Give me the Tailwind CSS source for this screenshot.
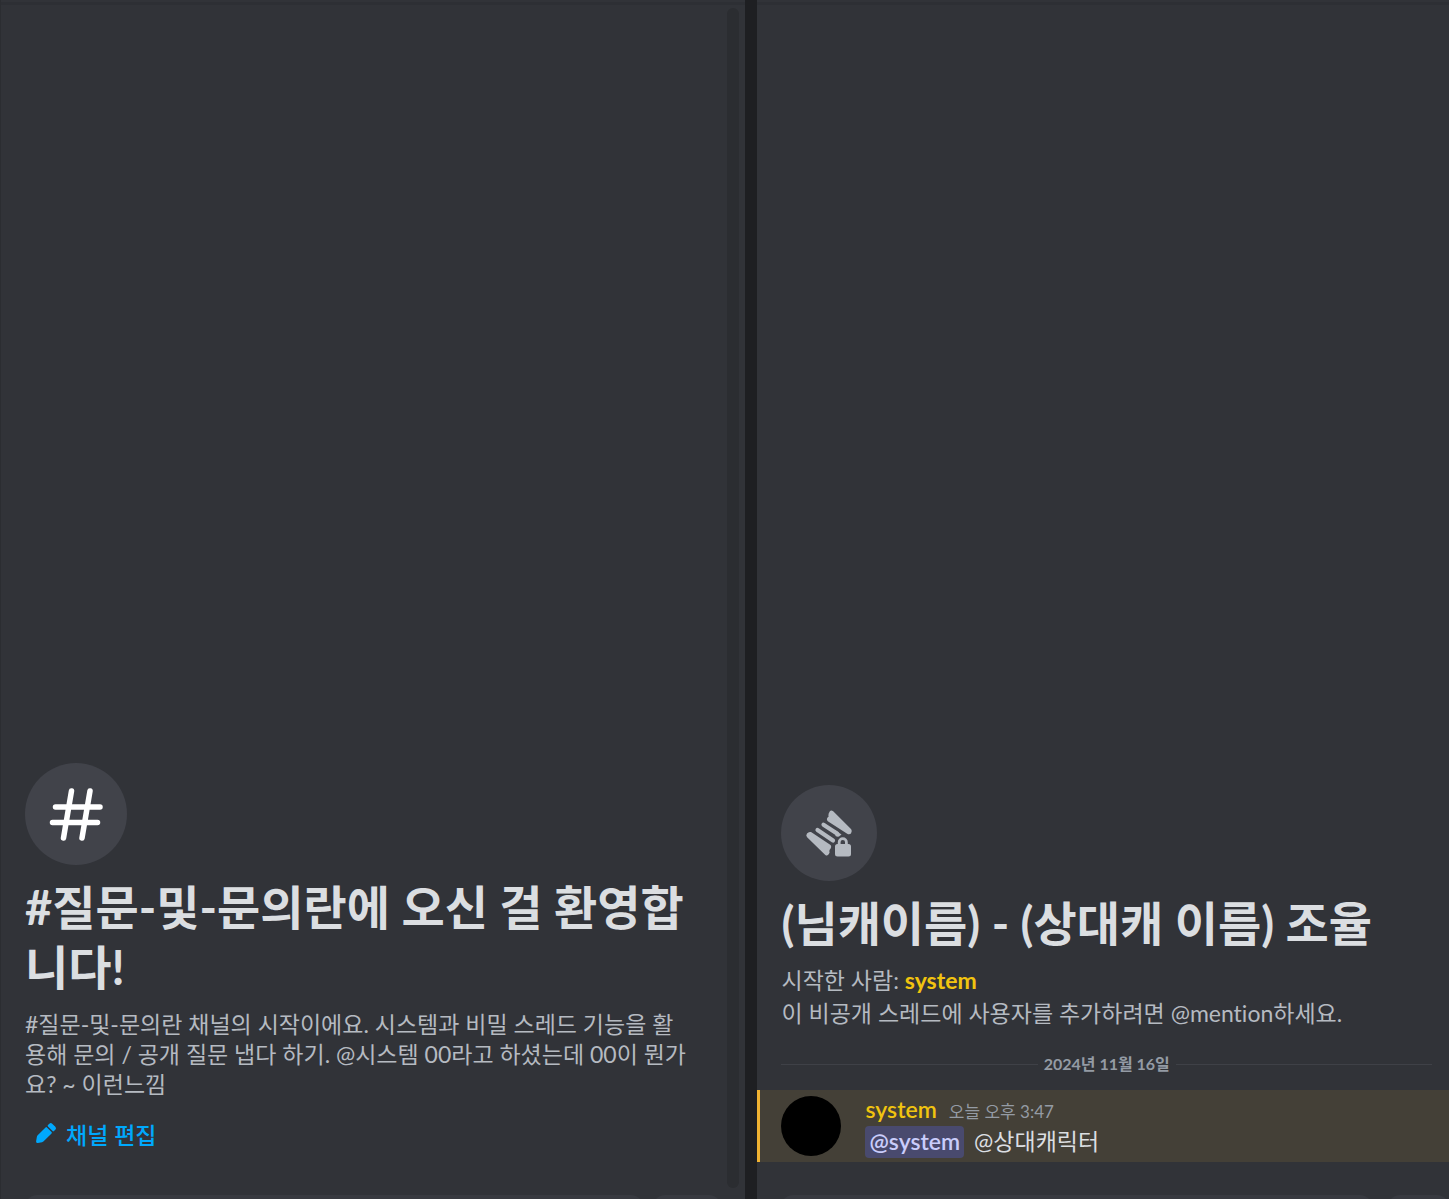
<!DOCTYPE html>
<html lang="ko">
<head>
<meta charset="utf-8">
<title>질문-및-문의란</title>
<meta name="viewport" content="width=device-width, initial-scale=1">
<script src="https://cdn.jsdelivr.net/npm/@tailwindcss/browser@4"></script>
</head>
<body class="flex h-screen overflow-hidden bg-[#313338] font-['Lato','Noto_Sans_CJK_KR',sans-serif] text-[#b5bac1] [font-variant-ligatures:none]">

  <!-- Channel pane -->
  <main class="flex min-w-0 flex-[745] flex-col border-l border-[#2b2d31]">
    <div class="mt-[2px] h-[3px] shrink-0 bg-[#2d2f34]"></div>
    <div class="flex min-h-0 flex-1">
      <section class="flex min-w-0 flex-1 flex-col justify-end pr-9 pb-9 pl-6">
        <div class="flex size-[102px] items-center justify-center rounded-full bg-[#41434a]">
          <svg class="size-[62px]" viewBox="0 0 62 62" fill="none" stroke="#fff" stroke-width="5.500" stroke-linecap="round" aria-hidden="true">
            <path d="M26.500 8 18.500 55M45 8 37 55M10.500 24H55M7.500 39.500H52.500"/>
          </svg>
        </div>
        <h1 class="mt-3 text-[47px] leading-[60px] font-bold text-[#dbdee1]">#질문-및-문의란에 오신 걸 환영합니다!</h1>
        <p class="mt-3 text-[23px] leading-[30px]">#질문-및-문의란 채널의 시작이에요. 시스템과 비밀 스레드 기능을 활용해 문의 / 공개 질문 냅다 하기. @시스템 00라고 하셨는데 00이 뭔가요? ~ 이런느낌</p>
        <button type="button" class="mt-3 flex h-12 items-center gap-2 self-start px-[9px] text-[23px] leading-[30px] font-medium text-[#00a8fc]">
          <svg class="mb-1 size-6" viewBox="0 0 24 24" fill="currentColor" aria-hidden="true">
            <path d="m13.960 5.460 4.580 4.580a1 1 0 0 0 1.420 0l1.380-1.380a2 2 0 0 0 0-2.820l-3.180-3.180a2 2 0 0 0-2.820 0l-1.380 1.380a1 1 0 0 0 0 1.420ZM2.110 20.160l.73-4.220a3 3 0 0 1 .83-1.610l7.870-7.870a1 1 0 0 1 1.420 0l4.580 4.580a1 1 0 0 1 0 1.420l-7.870 7.870a3 3 0 0 1-1.600.83l-4.230.73a1.500 1.500 0 0 1-1.730-1.730Z"/>
          </svg>
          채널 편집
        </button>
      </section>
      <div class="mt-[3px] mr-1.5 mb-[7px] w-3 shrink-0 rounded-full bg-[#2b2d31]"></div>
    </div>
    <div class="flex h-1 shrink-0 gap-2.5 overflow-hidden pr-6 pl-6">
      <div class="h-14 flex-1 rounded-xl bg-[#383a40]"></div>
      <div class="h-14 w-[68px] rounded-xl bg-[#383a40]"></div>
    </div>
  </main>

  <div class="w-3 shrink-0 bg-[#1e1f22]"></div>

  <!-- Thread pane -->
  <aside class="flex min-w-0 flex-[692] flex-col">
    <div class="mt-[2px] h-[3px] shrink-0 bg-[#2d2f34]"></div>
    <div class="flex min-h-0 flex-1 flex-col justify-end pb-[33px]">
      <header class="px-6">
        <div class="flex size-24 items-center justify-center rounded-full bg-[#41434a]">
          <svg class="size-[60px]" viewBox="0 0 60 60" fill="#b5bac1" aria-hidden="true">
            <path d="M30.700 8.500 Q32 6.500 34.200 8.300 L52.200 26.300 Q53.700 28.500 52 30.500 Q50.300 31.900 48.200 30.700 L28.800 18.300 Q27 16.500 28.800 14.300 Q30.100 13.700 29.400 12.400 Q29.300 10.500 30.700 8.500Z"/>
            <path d="M12 29.100 Q9.700 28.400 8 30.500 Q6.500 32.500 8.100 34.300 L26.300 52 Q28.500 53.500 29.900 51.100 Q31.100 49.300 30.300 47.900 Q30.500 46.500 31.500 45.700 Q33 43.300 31.200 41.800Z"/>
            <path d="M24.500 21.700 38 30.500M18.500 27 34 37.500" fill="none" stroke="#b5bac1" stroke-width="4.200" stroke-linecap="round"/>
            <path d="M36 27 L42.500 31.500 L40 33.500 Q38.500 34 36.500 33Z"/>
            <path fill-rule="evenodd" d="M38.800 41v-1.700a5 5 0 0 1 10 0V41h.7a2.500 2.500 0 0 1 2.500 2.500v7.500a2.500 2.500 0 0 1-2.500 2.500h-11a2.500 2.500 0 0 1-2.500-2.500v-7.500a2.500 2.500 0 0 1 2.500-2.500Zm2.800 0h4.400v-1.900a2.200 2.200 0 0 0-4.400 0Z"/>
          </svg>
        </div>
        <h2 class="mt-3 text-[47px] leading-[60px] font-bold text-[#dbdee1]">(님캐이름) - (상대캐 이름) 조율</h2>
        <p class="mt-[11px] text-[23px] leading-[33px]">시작한 사람: <a href="#" class="font-bold text-[#f1c40f]">system</a><br>이 비공개 스레드에 사용자를 추가하려면 @mention하세요.</p>
      </header>
      <div class="mt-6 mr-[17px] ml-6 flex items-center gap-1.5 text-base leading-[20px] font-bold text-[#949ba4]">
        <span class="h-px flex-1 bg-[#3f4147]"></span>
        <time datetime="2024-11-16">2024년 11월 16일</time>
        <span class="h-px flex-1 bg-[#3f4147]"></span>
      </div>
      <article class="mt-4 flex border-l-3 border-[#f0b232] bg-[#444037] py-1.5 pl-[21px]">
        <div class="size-[60px] rounded-full bg-black"></div>
        <div class="-my-1.5 ml-6 pt-1">
          <div class="flex h-8 items-baseline gap-3 leading-[30px]">
            <a href="#" class="text-[23px] font-semibold text-[#f1c40f]">system</a>
            <time class="text-[17px] text-[#949ba4]">오늘 오후 3:47</time>
          </div>
          <p class="flex gap-2.5 text-[23px] leading-[30px] text-[#dbdee1]"><a href="#" class="h-8 rounded bg-[#494a6e] px-1 font-semibold text-[#c9cdfb]">@system</a>@상대캐릭터</p>
        </div>
      </article>
    </div>
    <div class="flex h-1 shrink-0 gap-4 overflow-hidden pl-6">
      <div class="h-14 flex-1 rounded-xl bg-[#383a40]"></div>
      <div class="h-14 w-[61px] rounded-xl bg-[#383a40]"></div>
    </div>
  </aside>
</body>
</html>
